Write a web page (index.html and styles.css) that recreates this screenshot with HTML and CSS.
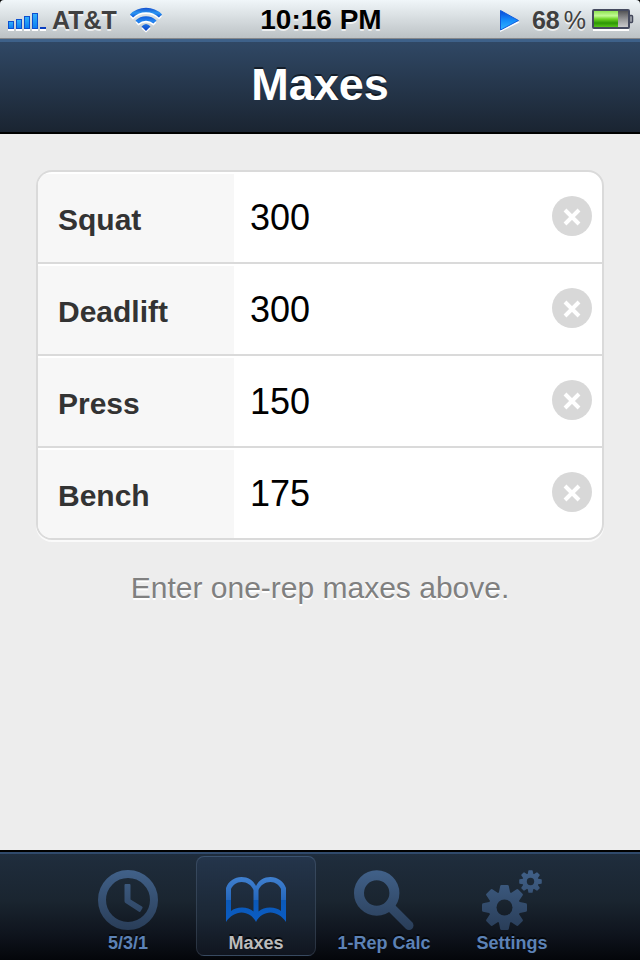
FILE: index.html
```html
<!DOCTYPE html>
<html lang="en">
<head>
<meta charset="utf-8">
<meta name="viewport" content="width=device-width, initial-scale=1">
<title>Maxes</title>
<link rel="stylesheet" href="styles.css">
</head>
<body>
<div class="status-wrap">
  <div class="status">
    <div class="status-side">
      <svg class="signal" width="38" height="24" viewBox="0 0 38 24" aria-hidden="true">
        <defs>
          <linearGradient id="sig" x1="0" y1="0" x2="0" y2="1"><stop offset="0" stop-color="#35b2fb"/><stop offset="1" stop-color="#0a7cf0"/></linearGradient>
        </defs>
        <path d="M0 22h6M8 22h6M16 22h6M24 22h6M32 22h6" stroke="#fff" stroke-width="2"/>
        <g fill="url(#sig)" stroke="#0d4fd0" stroke-width="1">
          <rect x=".5" y="13.500" width="5" height="7"/>
          <rect x="8.500" y="11.500" width="5" height="9"/>
          <rect x="16.500" y="8.500" width="5" height="12"/>
          <rect x="24.500" y="5.500" width="5" height="15"/>
        </g>
        <rect x="32" y="19" width="6" height="2" fill="#0b3fc0"/>
      </svg>
      <span class="status-text">AT&amp;T</span>
      <svg class="wifi" width="34" height="26" viewBox="0 0 34 26" aria-hidden="true">
        <defs>
          <linearGradient id="wf" gradientUnits="userSpaceOnUse" x1="0" y1="0" x2="0" y2="24"><stop offset="0" stop-color="#1245c8"/><stop offset=".25" stop-color="#2c96f2"/><stop offset=".4" stop-color="#1260dd"/><stop offset=".6" stop-color="#2586f0"/><stop offset="1" stop-color="#0b3fc4"/></linearGradient>
        </defs>
        <g fill="none" stroke="#fff" stroke-width="4" transform="translate(0 2)">
          <path d="M2.500 9A20.500 20.500 0 0 1 31.500 9"/>
          <path d="M8 15A13 13 0 0 1 26 15"/>
          <path d="M12.500 19.500Q17 15 21.500 19.500L17 23.500Z" fill="#fff" stroke="none"/>
        </g>
        <g stroke="url(#wf)" fill="none" stroke-width="4.500">
          <path d="M2.500 9A20.500 20.500 0 0 1 31.500 9"/>
          <path d="M8 15A13 13 0 0 1 26 15"/>
        </g>
        <path d="M12.500 19.500Q17 14.500 21.500 19.500L17 24Z" fill="url(#wf)"/>
      </svg>
    </div>
    <time class="clock">10:16 PM</time>
    <div class="status-side status-right">
      <svg class="play" width="20" height="24" viewBox="0 0 20 24" aria-hidden="true">
        <defs><linearGradient id="pl" x1="0" y1="0" x2="0" y2="1"><stop offset="0" stop-color="#0b48d8"/><stop offset=".5" stop-color="#148bfa"/><stop offset="1" stop-color="#31b6ff"/></linearGradient></defs>
        <path d="M0 4.500V24L19.500 14.500Z" fill="#fff"/>
        <path d="M.5 2.500V22L18.500 12.500Z" fill="url(#pl)" stroke="#0f5bdc"/>
      </svg>
      <span class="status-text">68<span class="percent">%</span></span>
      <svg class="battery" width="42" height="22" viewBox="0 0 42 22" aria-hidden="true">
        <defs>
          <linearGradient id="gr" x1="0" y1="0" x2="0" y2="1"><stop offset="0" stop-color="#8fe452"/><stop offset=".3" stop-color="#c2f995"/><stop offset=".5" stop-color="#6fd625"/><stop offset=".75" stop-color="#2c9606"/><stop offset="1" stop-color="#57c51a"/></linearGradient>
          <linearGradient id="em" x1="0" y1="0" x2="0" y2="1"><stop offset="0" stop-color="#4c4c4e"/><stop offset=".55" stop-color="#9c9c9e"/><stop offset="1" stop-color="#cfcfd1"/></linearGradient>
        </defs>
        <path d="M1 21h36" stroke="#fff" stroke-width="2"/>
        <rect x="37.500" y="6.500" width="3" height="7" rx="1" fill="#aeb2b8" stroke="#42475a" stroke-width="1.500"/>
        <rect x="1" y="1" width="36" height="18" rx="1" fill="url(#em)" stroke="#454a5f" stroke-width="2"/>
        <rect x="2" y="2" width="24" height="16" fill="url(#gr)"/>
      </svg>
    </div>
  </div>
</div>

<header class="title-bar"><h1>Maxes</h1></header>

<main class="content">
  <form class="card">
    <div class="row">
      <label for="squat">Squat</label>
      <input id="squat" type="text" inputmode="numeric" value="300">
      <button type="button" class="clear" aria-label="Clear Squat"><svg width="18" height="18" viewBox="0 0 18 18"><path d="M2 2L16 16M16 2L2 16"/></svg></button>
    </div>
    <div class="row">
      <label for="deadlift">Deadlift</label>
      <input id="deadlift" type="text" inputmode="numeric" value="300">
      <button type="button" class="clear" aria-label="Clear Deadlift"><svg width="18" height="18" viewBox="0 0 18 18"><path d="M2 2L16 16M16 2L2 16"/></svg></button>
    </div>
    <div class="row">
      <label for="press">Press</label>
      <input id="press" type="text" inputmode="numeric" value="150">
      <button type="button" class="clear" aria-label="Clear Press"><svg width="18" height="18" viewBox="0 0 18 18"><path d="M2 2L16 16M16 2L2 16"/></svg></button>
    </div>
    <div class="row">
      <label for="bench">Bench</label>
      <input id="bench" type="text" inputmode="numeric" value="175">
      <button type="button" class="clear" aria-label="Clear Bench"><svg width="18" height="18" viewBox="0 0 18 18"><path d="M2 2L16 16M16 2L2 16"/></svg></button>
    </div>
  </form>
  <p class="hint">Enter one-rep maxes above.</p>
</main>

<nav class="tabs">
  <a class="tab" href="#531">
    <svg width="60" height="60" viewBox="0 0 60 60" aria-hidden="true">
      <defs><linearGradient id="ic" gradientUnits="userSpaceOnUse" x1="0" y1="0" x2="0" y2="60"><stop offset="0" stop-color="#416189"/><stop offset="1" stop-color="#293d58"/></linearGradient></defs>
      <circle cx="30" cy="30" r="26" fill="none" stroke="url(#ic)" stroke-width="8"/>
      <path d="M26.500 15Q26.500 14 27.500 14H31.500Q32.500 14 32.500 15V29.500L44 36.500Q45 37.200 44.500 38L42.500 41.500Q41.800 42.300 41 41.800L27.500 33Q26.500 32.300 26.500 31Z" fill="url(#ic)"/>
    </svg>
    <span>5/3/1</span>
  </a>
  <a class="tab active" href="#maxes" aria-current="page">
    <svg width="60" height="60" viewBox="0 0 60 60" aria-hidden="true">
      <defs><linearGradient id="bk" gradientUnits="userSpaceOnUse" x1="0" y1="7" x2="0" y2="52"><stop offset="0" stop-color="#4080cf"/><stop offset=".5" stop-color="#2668bd"/><stop offset=".52" stop-color="#0b59b8"/><stop offset="1" stop-color="#0a5cc4"/></linearGradient></defs>
      <path fill="url(#bk)" fill-rule="evenodd" d="M0 52V18C2.500 11 8.500 7 15.500 7C22 7 27 10 30 16C33 10 38 7 44.500 7C51.500 7 57.500 11 60 18V52C56 46 50 42.500 44.500 42.500C38.500 42.500 33 46 30 52C27 46 21.500 42.500 15.500 42.500C10 42.500 4 46 0 52ZM5 41V19C7 15 10.500 12 15.500 12C21 12 25.500 15 27.500 20V41.500C24.500 39 20.500 37.500 16 37.500C11.500 37.500 7.500 38.700 5 41ZM55 41V19C53 15 49.500 12 44.500 12C39 12 34.500 15 32.500 20V41.500C35.500 39 39.500 37.500 44 37.500C48.500 37.500 52.500 38.700 55 41Z"/>
    </svg>
    <span>Maxes</span>
  </a>
  <a class="tab" href="#calc">
    <svg width="60" height="60" viewBox="0 0 60 60" aria-hidden="true">
      <circle cx="22.700" cy="23" r="17.700" fill="none" stroke="url(#ic)" stroke-width="10"/>
      <path d="M37 37.500L55 55.500" fill="none" stroke="url(#ic)" stroke-width="9" stroke-linecap="round"/>
    </svg>
    <span>1-Rep Calc</span>
  </a>
  <a class="tab" href="#settings">
    <svg width="60" height="60" viewBox="0 0 60 60" aria-hidden="true">
      <defs>
        <path id="tooth" d="M-6 -13L-4.300 -21.500Q-4.100 -22.500 -3 -22.500H3Q4.100 -22.500 4.300 -21.500L6 -13Z"/>
        <g id="gear">
          <circle r="16"/>
          <use href="#tooth"/><use href="#tooth" transform="rotate(45)"/><use href="#tooth" transform="rotate(90)"/><use href="#tooth" transform="rotate(135)"/>
          <use href="#tooth" transform="rotate(180)"/><use href="#tooth" transform="rotate(225)"/><use href="#tooth" transform="rotate(270)"/><use href="#tooth" transform="rotate(315)"/>
        </g>
        <mask id="gears" maskUnits="userSpaceOnUse" x="0" y="0" width="60" height="60">
          <use href="#gear" fill="#fff" transform="translate(22.500 37.500)"/>
          <circle cx="22.500" cy="37.500" r="8" fill="#000"/>
          <use href="#gear" fill="#fff" transform="translate(48.500 11.500) scale(.5)"/>
          <circle cx="48.500" cy="11.500" r="3.700" fill="#000"/>
        </mask>
      </defs>
      <rect width="60" height="60" fill="url(#ic)" mask="url(#gears)"/>
    </svg>
    <span>Settings</span>
  </a>
</nav>
</body>
</html>
```
FILE: styles.css
```css
* { box-sizing: border-box; }

body {
  margin: 0;
  min-height: 100vh;
  display: flex;
  flex-direction: column;
  background: #ededed;
  font-family: "Liberation Sans", Arial, sans-serif;
}

.status-wrap { background: #000; }

.status {
  height: 39px;
  padding: 0 6px 0 8px;
  display: grid;
  grid-template-columns: 1fr auto 1fr;
  align-items: center;
  background: linear-gradient(#f0f6f9, #bcc2c5);
  border-bottom: 1px solid #85878a;
  border-radius: 4px 4px 0 0;
  text-shadow: 0 2px 0 rgba(255, 255, 255, .7);
}

.status-side { display: flex; align-items: center; }
.status-right { justify-content: flex-end; }

.status-text {
  margin-left: 6px;
  padding-top: 2px;
  font-size: 25px;
  line-height: 36px;
  font-weight: 700;
  color: #404040;
}

.percent { margin-left: 4px; font-weight: 400; }
.signal { margin-top: 2px; }
.wifi { margin-left: 12px; margin-top: 2px; }
.play { margin-right: 6px; margin-top: 2px; }
.battery { margin-left: 6px; margin-top: 2px; }

.clock {
  padding-top: 2px;
  font-size: 28px;
  line-height: 36px;
  font-weight: 700;
  color: #000;
}

.title-bar {
  height: 95px;
  border-top: 3px solid #3e6189;
  border-bottom: 2px solid #000;
  background: linear-gradient(#304865, #1a2431);
}

.title-bar h1 {
  margin: 0;
  font-size: 45px;
  line-height: 86px;
  text-align: center;
  color: #fff;
  text-shadow: 0 -2px 0 rgba(0, 0, 0, .5);
}

.content { flex: 1; padding: 36px; }

.card {
  border: 2px solid #dadada;
  border-radius: 16px;
  background: #fff;
  overflow: hidden;
  box-shadow: 0 2px 0 #fafafa;
}

.row {
  height: 92px;
  padding: 2px 10px 0 0;
  display: flex;
  align-items: center;
  border-bottom: 2px solid #dadada;
}

.row:last-child { height: 90px; border-bottom: 0; }

.row label {
  width: 196px;
  height: 88px;
  padding: 4px 0 0 20px;
  background: #f7f7f7;
  font-size: 30px;
  line-height: 84px;
  font-weight: 700;
  color: #333;
}

.row input {
  flex: 1;
  min-width: 0;
  height: 88px;
  margin: 0;
  padding: 0 16px;
  border: 0;
  outline: 0;
  background: none;
  font: 36px "Liberation Sans", Arial, sans-serif;
  color: #000;
}

.clear {
  width: 40px;
  height: 40px;
  margin: 0 0 4px;
  padding: 2px 0 0;
  display: grid;
  place-items: center;
  border: 0;
  border-radius: 50%;
  background: #d8d8d8;
}

.clear path { stroke: #fff; stroke-width: 4; fill: none; }

.hint {
  margin: 30px 0 0;
  font-size: 30px;
  line-height: 36px;
  text-align: center;
  color: #808080;
  text-shadow: 0 2px 0 #fff;
}

.tabs {
  height: 110px;
  padding: 4px 0;
  display: flex;
  justify-content: center;
  gap: 8px;
  border-top: 2px solid #000;
  background: linear-gradient(#304a6c 0 2px, #1f2d3d 2px, #1a2530 45%, #0e131c 78%, #04060a);
}

.tab {
  width: 120px;
  padding-top: 13px;
  display: flex;
  flex-direction: column;
  align-items: center;
  gap: 3px;
  border: 1px solid transparent;
  border-radius: 8px;
  font-size: 18px;
  line-height: 20px;
  font-weight: 700;
  color: #5c82b6;
  text-decoration: none;
  text-shadow: 0 -2px 0 #05080c;
}

.active {
  color: #bcbcbc;
  border-color: rgba(150, 170, 200, .18);
  border-top-color: #3a526f;
  background: linear-gradient(#24354b, #1b2735 60%, #10151f);
}
```
